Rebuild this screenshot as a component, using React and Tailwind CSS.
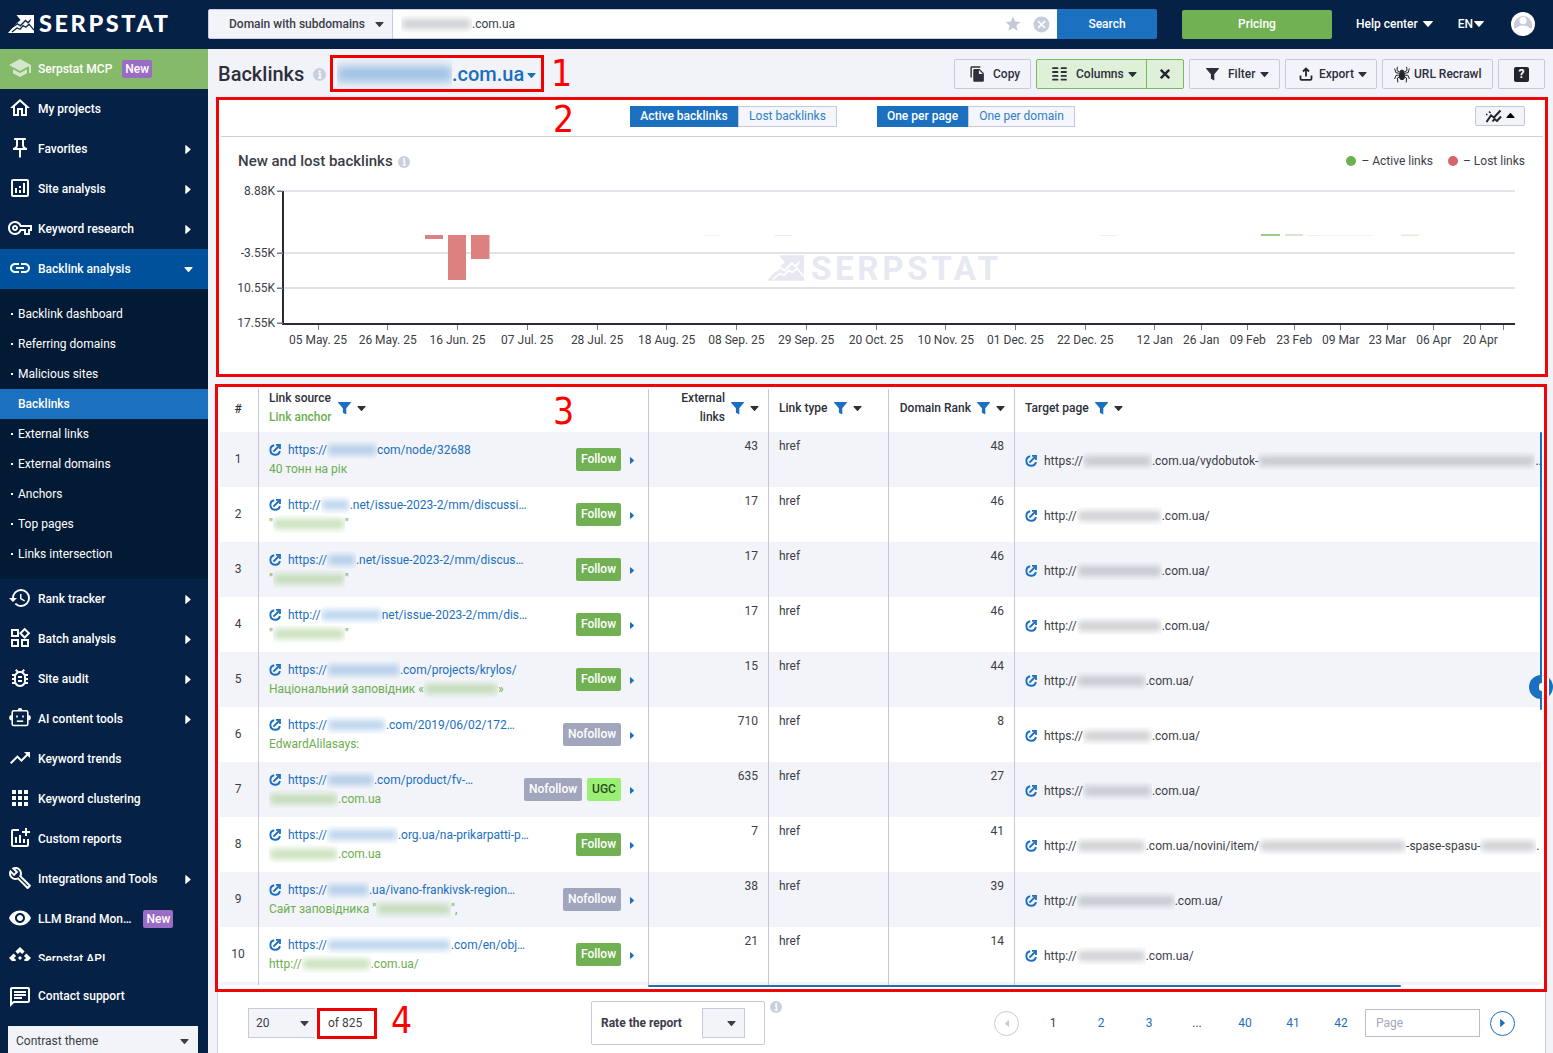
import React from 'react';
import {
  MdApi,
  MdApps,
  MdCancel,
  MdFileCopy,
  MdHistory,
  MdLink,
  MdOutlineAddchart,
  MdOutlineAnalytics,
  MdOutlineBugReport,
  MdOutlineBuild,
  MdOutlineChat,
  MdOutlineHome,
  MdOutlinePushPin,
  MdOutlineVpnKey,
  MdOutlineWidgets,
  MdRemoveRedEye,
  MdSchool,
  MdStar,
  MdTrendingUp,
} from 'react-icons/md';

const Caret = ({ className = '' }) => (
  <svg viewBox="0 0 10 6" className={`h-[5px] w-[9px] shrink-0 ${className}`} fill="currentColor">
    <path d="M0.6 0h8.8a.5.5 0 0 1 .4.8L5.6 5.6a.8.8 0 0 1-1.2 0L.2.8A.5.5 0 0 1 .6 0z" />
  </svg>
);

const CaretRight = ({ className = '' }) => (
  <svg viewBox="0 0 6 10" className={`shrink-0 ${className}`} fill="currentColor">
    <path d="M0 .6v8.8a.5.5 0 0 0 .8.4L5.6 5.6a.8.8 0 0 0 0-1.2L.8.2A.5.5 0 0 0 0 .6z" />
  </svg>
);

const Funnel = ({ className = '' }) => (
  <svg viewBox="0 0 13 13" className={`shrink-0 ${className}`} fill="currentColor">
    <path d="M.4 0h12.2c.4 0 .5.5.3.8L8.3 6.2V12.6L4.9 10.8V6.2L.1.8C-.1.5 0 0 .4 0z" />
  </svg>
);

const OpenLink = () => (
  <svg viewBox="0 0 12 12" className="h-3 w-3 shrink-0" fill="none" stroke="#1b6fbf" strokeWidth="1.9">
    <path d="M5.2 1.3A4.8 4.8 0 1 0 10.9 7" />
    <path d="M4.4 7.6 10 2" />
    <path d="M7 .9h4v4" strokeWidth="1.8" />
  </svg>
);

const Info = ({ className = '' }) => (
  <svg viewBox="0 0 12 12" className={`shrink-0 ${className}`}>
    <circle cx="6" cy="6" r="6" fill="#c9cfdd" />
    <circle cx="6.2" cy="3.1" r="1" fill="#fff" />
    <path d="M5 5h1.500v3.900M4.600 9h3" stroke="#fff" strokeWidth="1.300" fill="none" />
  </svg>
);

const RobotIcon = ({ className = '' }) => (
  <svg viewBox="-1 -0.5 24 24" className={className} fill="none" stroke="currentColor" strokeWidth="1.600">
    <rect x="3.2" y="4.2" width="15.6" height="14.8" rx="1.6" />
    <path d="M7.8 14.7h6.4" />
    <path d="M8 9v2M14 9v2" />
    <path d="M8.6 4a2.4 2.4 0 0 1 4.8 0zM2.8 8.600a2.600 2.600 0 0 0 0 5.200zM19.200 8.600a2.600 2.600 0 0 1 0 5.200z" fill="currentColor" stroke="none" />
  </svg>
);

const Spider = () => (
  <svg viewBox="0 0 16 17" className="h-[17px] w-4 shrink-0" fill="none" stroke="#22242e" strokeWidth="1">
    <ellipse cx="8" cy="10.3" rx="2.6" ry="3.4" fill="#22242e" />
    <circle cx="8" cy="6" r="1.9" fill="#22242e" />
    <path d="M6.5 6.5 3 4.6 3.4.8M9.5 6.5 13 4.6 12.6.8M6.2 7.5 1.8 6.6.6 2.5M9.8 7.5l4.4-.9 1.2-4.1" />
    <path d="M6 9 2 9.4.6 13M10 9l4 .4L15.4 13M6 10.6 3.4 12l.4 4.4M10 10.6l2.6 1.4-.4 4.4" />
  </svg>
);

const LogoMark = ({ className = '', gap }) => (
  <svg viewBox="0 0 26 18" className={className}>
    <path d="M8.500 0H26v18H0l7-8.200L12.500 5z" fill="currentColor" />
    <path d="M2 13.600 9.500 8.800l2.800 2L17.500 5.500l2.500 2.300 3-3.300" stroke={gap} strokeWidth="1.300" fill="none" />
    <path d="M4 17l5-4 3 1.200 3.200-3.600 2.600 1.600 3.200-3 5 6" stroke={gap} strokeWidth="1.200" fill="none" />
    <path d="M22.400 5.400 26 9.400V0z" fill="currentColor" />
  </svg>
);

// masked part of a url or anchor
const Masked = ({ w, tone = 'gray' }) => {
  const tones = { gray: 'bg-[#8b8e98]/42', blue: 'bg-[#4b8fd0]/38', green: 'bg-[#8fc172]/48' };
  return (
    <span className="inline-block shrink-0 overflow-hidden px-px align-middle" style={{ width: w }}>
      <span className={`my-1 block h-2.5 w-full blur-[3px] ${tones[tone]}`} />
    </span>
  );
};

const Parts = ({ parts, tone }) =>
  parts.map((part, i) => (typeof part === 'number' ? <Masked key={i} w={part} tone={tone} /> : <span key={i}>{part}</span>));

const topMenu = [
  { label: 'My projects', icon: MdOutlineHome },
  { label: 'Favorites', icon: MdOutlinePushPin, arrow: true },
  { label: 'Site analysis', icon: MdOutlineAnalytics, arrow: true },
  { label: 'Keyword research', icon: MdOutlineVpnKey, arrow: true },
];

const subMenu = [
  'Backlink dashboard',
  'Referring domains',
  'Malicious sites',
  'Backlinks',
  'External links',
  'External domains',
  'Anchors',
  'Top pages',
  'Links intersection',
];

const bottomMenu = [
  { label: 'Rank tracker', icon: MdHistory, arrow: true },
  { label: 'Batch analysis', icon: MdOutlineWidgets, arrow: true },
  { label: 'Site audit', icon: MdOutlineBugReport, arrow: true },
  { label: 'AI content tools', icon: RobotIcon, arrow: true },
  { label: 'Keyword trends', icon: MdTrendingUp },
  { label: 'Keyword clustering', icon: MdApps },
  { label: 'Custom reports', icon: MdOutlineAddchart },
  { label: 'Integrations and Tools', icon: MdOutlineBuild, arrow: true },
  { label: 'LLM Brand Mon…', icon: MdRemoveRedEye, isNew: true },
  { label: 'Serpstat API', icon: MdApi },
];

const rows = [
  { src: ['https://', 50, 'com/node/32688'], anchor: ['40 тонн на рік'], tags: ['Follow'], ext: 43, rank: 48, target: ['https://', 69, '.com.ua/vydobutok-', 277, '..'] },
  { src: ['http://', 29, '.net/issue-2023-2/mm/discussi…'], anchor: ['"', 72, '"'], tags: ['Follow'], ext: 17, rank: 46, target: ['http://', 85, '.com.ua/'] },
  { src: ['https://', 29, '.net/issue-2023-2/mm/discus…'], anchor: ['"', 72, '"'], tags: ['Follow'], ext: 17, rank: 46, target: ['http://', 85, '.com.ua/'] },
  { src: ['http://', 61, 'net/issue-2023-2/mm/dis…'], anchor: ['"', 72, '"'], tags: ['Follow'], ext: 17, rank: 46, target: ['http://', 85, '.com.ua/'] },
  { src: ['https://', 73, '.com/projects/krylos/'], anchor: ['Національний заповідник «', 74, '»'], tags: ['Follow'], ext: 15, rank: 44, target: ['http://', 69, '.com.ua/'] },
  { src: ['https://', 59, '.com/2019/06/02/172…'], anchor: ['EdwardAlilasays:'], tags: ['Nofollow'], ext: 710, rank: 8, target: ['https://', 69, '.com.ua/'] },
  { src: ['https://', 47, '.com/product/fv-…'], anchor: [69, '.com.ua'], tags: ['Nofollow', 'UGC'], ext: 635, rank: 27, target: ['https://', 69, '.com.ua/'] },
  { src: ['https://', 71, '.org.ua/na-prikarpatti-p…'], anchor: [69, '.com.ua'], tags: ['Follow'], ext: 7, rank: 41, target: ['http://', 69, '.com.ua/novini/item/', 147, '-spase-spasu-', 56, '.'] },
  { src: ['https://', 42, '.ua/ivano-frankivsk-region…'], anchor: ['Сайт заповідника "', 75, '",'], tags: ['Nofollow'], ext: 38, rank: 39, target: ['http://', 98, '.com.ua/'] },
  { src: ['https://', 124, '.com/en/obj…'], anchor: ['http://', 69, '.com.ua/'], tags: ['Follow'], ext: 21, rank: 14, target: ['http://', 69, '.com.ua/'] },
];

const tagStyles = {
  Follow: 'w-[45px] bg-[#71b154] text-white',
  Nofollow: 'w-[58px] bg-[#a2a6bc] text-white',
  UGC: 'w-[34px] bg-[#99f075] text-[#2f4a24]',
};

const xTicks = [
  [318, '05 May. 25'], [387.7, '26 May. 25'], [457.5, '16 Jun. 25'], [527.2, '07 Jul. 25'], [597, '28 Jul. 25'],
  [666.7, '18 Aug. 25'], [736.4, '08 Sep. 25'], [806.2, '29 Sep. 25'], [876, '20 Oct. 25'], [945.7, '10 Nov. 25'],
  [1015.4, '01 Dec. 25'], [1085.2, '22 Dec. 25'], [1154.7, '12 Jan'], [1201.2, '26 Jan'], [1247.7, '09 Feb'],
  [1294.2, '23 Feb'], [1340.7, '09 Mar'], [1387.2, '23 Mar'], [1433.7, '06 Apr'], [1480.2, '20 Apr'],
];

const yTicks = [[191, '8.88K'], [253, '-3.55K'], [288, '10.55K'], [323, '17.55K']];

const bars = [
  [425, 235, 18, 4, '#dd8080'], [448, 235, 18, 45, '#dd8080'], [471, 235, 18.5, 24, '#dd8080'],
  [1261, 234, 19, 2, '#9ccb86'], [1285, 234, 18, 2, '#d6e8cc'], [1307, 235, 18, 1, '#eef1ec'],
  [1326, 235, 46, 1, '#f3f4f2'], [1401, 234.5, 18, 1.5, '#e2eedb'], [774, 235, 18, 1, '#eaf0e6'],
  [1100, 235, 17, 1, '#eef1ec'], [704, 235, 16, 1, '#f1f3ef'],
];

const NewBadge = ({ className = '' }) => (
  <span className={`flex h-[18px] w-[30px] items-center justify-center rounded-[2px] bg-[#9a6cc4] text-xs text-white ${className}`}>New</span>
);

const MenuItem = ({ item }) => {
  const Icon = item.icon;
  return (
    <div className="flex h-10 shrink-0 items-center pr-[17px] pl-2 text-xs font-medium text-white">
      <Icon className="-mt-0.5 h-6 w-6 shrink-0" />
      <span className="ml-1.5 whitespace-nowrap">{item.label}</span>
      {item.isNew && <NewBadge className="ml-3" />}
      {item.arrow && <CaretRight className="ml-auto h-[9px] w-[6px]" />}
    </div>
  );
};

const Sidebar = () => (
  <aside className="flex w-[208px] shrink-0 flex-col overflow-hidden bg-[#052145]">
    <div className="flex h-10 shrink-0 items-center bg-[#84ba6a] pl-2 text-xs font-medium text-white">
      <MdSchool className="-mt-0.5 h-6 w-6 opacity-65" />
      <span className="ml-1.5">Serpstat MCP</span>
      <NewBadge className="ml-2.5" />
    </div>
    {topMenu.map((item) => <MenuItem key={item.label} item={item} />)}
    <div className="flex h-10 shrink-0 items-center bg-[#00519b] pr-[15px] pl-2 text-xs font-medium text-white">
      <MdLink className="-mt-0.5 h-6 w-6" />
      <span className="ml-1.5">Backlink analysis</span>
      <Caret className="ml-auto" />
    </div>
    <div className="shrink-0 bg-[#031a35] py-2.5">
      {subMenu.map((label) => (
        <div
          key={label}
          className={`flex h-[30px] items-center text-xs text-white ${label === 'Backlinks' ? 'bg-[#1b70c0] pl-[18px] font-medium' : 'pl-[11px]'}`}
        >
          {label !== 'Backlinks' && <span className="mr-[5px] h-[2px] w-[2px] bg-white" />}
          {label}
        </div>
      ))}
    </div>
    <div className="h-[382px] shrink-0 overflow-hidden">
      {bottomMenu.map((item) => <MenuItem key={item.label} item={item} />)}
    </div>
    <div className="flex h-[65px] shrink-0 items-center pt-1 pl-2 text-xs font-medium text-white">
      <MdOutlineChat className="mt-0.5 h-6 w-6" />
      <span className="ml-1.5">Contact support</span>
    </div>
    <div className="mr-2.5 ml-2 flex h-[30px] shrink-0 items-center justify-between bg-[#f2f4fa] pr-[9px] pl-2 text-xs text-[#3b3d47]">
      Contrast theme
      <Caret />
    </div>
  </aside>
);

const Header = () => (
  <header className="flex h-[49px] shrink-0 items-center bg-[#052145] pb-px text-xs">
    <div className="flex w-[208px] items-center pl-2 text-white">
      <LogoMark className="h-[18px] w-[26px]" gap="#052145" />
      <svg className="ml-[5px] h-[26px] w-[134px] overflow-visible" fill="currentColor">
        <text x="0" y="21" fontSize="23.500" fontWeight="900" textLength="129" className="font-[Lato,sans-serif]">SERPSTAT</text>
      </svg>
    </div>
    <div className="flex h-[30px] w-[185px] items-center justify-between rounded-l-[2px] border border-[#c3cfe0] bg-[#f2f4fa] pr-2 pl-5 font-medium text-[#3b3d47]">
      Domain with subdomains
      <Caret />
    </div>
    <div className="flex h-[30px] w-[664px] items-center border-y border-[#c3cfe0] bg-white pl-2 text-[#3b3d47]">
      <Masked w={71} />
      .com.ua
      <MdStar className="mr-2.5 ml-auto h-[18px] w-[18px] text-[#c5c8d8]" />
      <MdCancel className="mr-[6px] h-[19px] w-[19px] text-[#c9ccda]" />
    </div>
    <button className="h-[30px] w-[100px] rounded-r-[2px] bg-[#1b70c0] pb-px font-medium text-white">Search</button>
    <button className="ml-[25px] h-[29px] w-[150px] rounded-[2px] bg-[#71b154] font-medium text-white">Pricing</button>
    <span className="ml-[24px] flex items-center font-medium text-white">
      Help center
      <Caret className="ml-[5px] h-[6px] w-[10px]" />
    </span>
    <span className="ml-[25px] flex items-center font-medium text-white">
      EN
      <Caret className="ml-px h-[6px] w-[10px]" />
    </span>
    <svg viewBox="0 0 24 24" className="ml-[27px] h-6 w-6">
      <circle cx="12" cy="12" r="12" fill="#fff" />
      <path d="M3 13a9 9 0 1 1 18 0v3H3z" fill="#c6cadb" />
      <circle cx="12" cy="8.6" r="3.6" fill="#fff" />
      <path d="M4 19c1-4 4.500-5.500 8-5.500s7 1.500 8 5.500z" fill="#fff" />
    </svg>
  </header>
);

const toolButton = 'flex h-[30px] shrink-0 items-center rounded-[2px] border border-[#c7cbd9] bg-[#f2f4fa]';

const Toolbar = () => (
  <div className="flex h-12 shrink-0 items-center pt-0.5 text-xs font-medium text-[#2d2f3a]">
    <h1 className="ml-2.5 w-[95px] text-[20px]">Backlinks</h1>
    <Info className="h-[13px] w-[13px]" />
    <div className="ml-[11px] flex items-center text-[20px] whitespace-nowrap text-[#1b6fbf]">
      <span className="inline-block w-[115px] overflow-hidden">
        <span className="my-2 block h-4 w-full bg-[#4b8fd0]/50 blur-[5px]" />
      </span>
      .com.ua
      <Caret className="mt-0.5 ml-[3px] h-1 w-[7px]" />
    </div>
    <div className="mr-2 ml-auto flex gap-[5px]">
      <button className={`${toolButton} w-[77px] pl-[14px]`}>
        <MdFileCopy className="mr-[7px] h-[18px] w-[17px]" />
        Copy
      </button>
      <div className="flex h-[30px] w-[148px] items-center rounded-[2px] border border-[#76ba5e] bg-[#dff0d8]">
        <div className="flex h-full w-[110px] items-center border-r border-[#76ba5e] pl-[15px]">
          <svg viewBox="0 0 15 14" className="mr-[9px] h-[14px] w-[15px]" stroke="#2d2f3a" strokeWidth="1.800" strokeLinecap="round">
            <path d="M1 1.200h4.500M9.500 1.200H14M1 5h4.500M9.500 5H14M1 8.900h4.500M9.500 8.900H14M1 12.700h4.500M9.500 12.700H14" />
          </svg>
          Columns
          <Caret className="ml-1 w-2" />
        </div>
        <svg viewBox="0 0 10 10" className="mx-auto h-[10px] w-[10px]" stroke="#22242e" strokeWidth="2.400">
          <path d="M.8.8l8.400 8.400M9.200.8.8 9.200" />
        </svg>
      </div>
      <button className={`${toolButton} w-[91px] pl-4`}>
        <Funnel className="mr-[9px] h-[13px] w-[13px]" />
        Filter
        <Caret className="ml-[5px] w-2" />
      </button>
      <button className={`${toolButton} w-[92px] pl-[13px]`}>
        <svg viewBox="0 0 14 14" className="mr-[6px] h-[14px] w-[14px]" fill="none" stroke="#22242e" strokeWidth="1.800">
          <path d="M1.500 8.500v3.200a1.200 1.200 0 0 0 1.200 1.200h8.600a1.200 1.200 0 0 0 1.200-1.200V8.500M7 9.500V2M4 4.500 7 1.500l3 3" />
        </svg>
        Export
        <Caret className="ml-1 w-2" />
      </button>
      <button className={`${toolButton} w-[111px] pl-[11px]`}>
        <Spider />
        <span className="ml-1 whitespace-nowrap">URL Recrawl</span>
      </button>
      <button className={`${toolButton} w-[47px] justify-center`}>
        <span className="flex h-[15px] w-[15px] items-center justify-center rounded-[2px] bg-[#22242e] text-xs font-bold text-white">?</span>
      </button>
    </div>
  </div>
);

const Chart = () => (
  <svg viewBox="221 180 1322 180" className="block h-[180px] w-[1322px]" fontSize="12" fill="#3b3d47">
    {yTicks.slice(0, 3).map(([y]) => <rect key={y} x="284" y={y - 1} width="1231" height="2" fill="#e0e3ea" />)}
    <g color="#e7e9f2">
      <svg x="767" y="255" width="37" height="26">
        <LogoMark gap="#fff" />
      </svg>
      <text x="811" y="280" fontSize="33" fontWeight="700" textLength="187" fill="#e7e9f2">SERPSTAT</text>
    </g>
    {bars.map(([x, y, w, h, fill]) => <rect key={x} x={x} y={y} width={w} height={h} fill={fill} />)}
    <rect x="282" y="191" width="2" height="133" fill="#2b2c3b" />
    <rect x="282" y="323" width="1233" height="2" fill="#2b2c3b" />
    {yTicks.map(([y, label]) => (
      <g key={label}>
        <rect x="277" y={y - 0.5} width="6" height="1.500" fill="#777b88" />
        <text x="275" y={y + 4} textAnchor="end">{label}</text>
      </g>
    ))}
    {xTicks.map(([x, label]) => (
      <g key={label}>
        <rect x={Math.floor(x)} y="325" width="1" height="5" fill="#777b88" />
        <text x={x} y="344" textAnchor="middle">{label}</text>
      </g>
    ))}
    <rect x="1503" y="325" width="1" height="5" fill="#777b88" />
  </svg>
);

const ChartPanel = () => (
  <section className="mr-[7px] ml-[10px] h-[280px] shrink-0 bg-white px-[3px] text-xs">
    <div className="flex h-10 items-center border-b border-[#cdd1dc] pr-[18px] pl-[409px]">
      <div className="flex h-[21px] leading-[19px]">
        <span className="w-[108px] bg-[#1b70c0] pt-px text-center font-medium text-white">Active backlinks</span>
        <span className="w-[99px] border border-[#c3cad9] bg-[#f4f6fb] text-center text-[#2f7fc6]">Lost backlinks</span>
      </div>
      <div className="ml-10 flex h-[21px] leading-[19px]">
        <span className="w-[91px] bg-[#1b70c0] pt-px text-center font-medium text-white">One per page</span>
        <span className="w-[107px] border border-[#c3cad9] bg-[#f4f6fb] text-center text-[#2f7fc6]">One per domain</span>
      </div>
      <div className="mb-0.5 ml-auto flex h-5 w-[50px] items-center justify-center gap-[4px] rounded-[2px] border border-[#c3c8d6] bg-[#f2f4fa]">
        <svg viewBox="0 0 17 14" className="h-[14px] w-[17px]" fill="none" stroke="#22242e" strokeWidth="2">
          <path d="M1.500 13 6 6.500l3 2L15.500 1.500" />
          <path d="M7.500 12.500 9.500 10l2.500 2 4-4.500" />
          <path d="M1 5.500h1.500M4 2.500 5.500 4" strokeWidth="1.500" />
        </svg>
        <Caret className="w-2 rotate-180" />
      </div>
    </div>
    <div className="flex h-[43px] items-center pt-1 pr-[18px] pl-[17px] text-[#3b3d47]">
      <h2 className="pt-0.5 text-[15px] font-medium">New and lost backlinks</h2>
      <Info className="mt-0.5 ml-[5px] h-3 w-3" />
      <span className="ml-auto h-2.5 w-2.5 rounded-full bg-[#6cb04f]" />
      <span className="ml-[5px]">– Active links</span>
      <span className="ml-[15px] h-2.5 w-2.5 rounded-full bg-[#d5646b]" />
      <span className="ml-[5px]">– Lost links</span>
    </div>
    <Chart />
  </section>
);

const HeadIcons = () => (
  <>
    <Funnel className="ml-[6px] h-[13px] w-[13px] text-[#1b6fbf]" />
    <Caret className="ml-[6px] h-1 w-2" />
  </>
);

const grid = 'grid grid-cols-[38px_390px_120px_120px_126px_527px]';

const TableRow = ({ row, index }) => (
  <div className={`${grid} h-[55px] ${index % 2 === 0 ? 'bg-[#f2f4f9]' : 'bg-white'}`}>
    <div className="flex items-center justify-center pr-0.5 pb-px">{index + 1}</div>
    <div className="flex border-l border-[#c5c9d4] pr-[14px] pl-[10px]">
      <div className="whitespace-nowrap">
        <div className="mt-2 flex h-[19px] items-center text-[#1b6fbf]">
          <OpenLink />
          <span className="ml-[7px] flex items-center">
            <Parts parts={row.src} tone="blue" />
          </span>
        </div>
        <div className="flex h-[19px] items-center text-[#6cae4f]">
          <Parts parts={row.anchor} tone="green" />
        </div>
      </div>
      <div className="ml-auto flex items-center gap-[5px]">
        {row.tags.map((tag) => (
          <span key={tag} className={`flex h-[23px] items-center justify-center rounded-[2px] pb-0.5 font-medium ${tagStyles[tag]}`}>{tag}</span>
        ))}
        <CaretRight className="mt-0.5 ml-1 h-[7px] w-1 text-[#1b6fbf]" />
      </div>
    </div>
    <div className="border-l border-[#c5c9d4] pt-1 pr-[10px] text-right leading-5">{row.ext}</div>
    <div className="border-l border-[#c5c9d4] pt-1 pl-[10px] leading-5">href</div>
    <div className="border-l border-[#c5c9d4] pt-1 pr-[10px] text-right leading-5">{row.rank}</div>
    <div className="flex items-center border-l border-[#c5c9d4] pt-0.5 pl-[10px] whitespace-nowrap">
      <OpenLink />
      <span className="ml-[7px] flex items-center">
        <Parts parts={row.target} tone="gray" />
      </span>
    </div>
  </div>
);

const LinksTable = () => (
  <section className="relative mr-2 ml-[10px] mt-[7px] h-[608px] shrink-0 bg-white pt-[5px] pr-1 pl-0.5 text-xs text-[#3b3d47]">
    <div className={`${grid} h-[43px] font-medium text-[#2d2f3a]`}>
      <div className="flex items-center justify-center pr-0.5 pb-1">#</div>
      <div className="flex items-center border-l border-[#c5c9d4] pb-[5px] pl-[10px] leading-[19px]">
        <div>
          Link source
          <div className="text-[#6cae4f]">Link anchor</div>
        </div>
        <HeadIcons />
      </div>
      <div className="flex items-center justify-end border-l border-[#c5c9d4] pr-[9px] pb-[5px] text-right leading-[19px]">
        <div className="w-[50px]">External links</div>
        <HeadIcons />
      </div>
      <div className="flex items-center border-l border-[#c5c9d4] pb-[5px] pl-[10px]">
        Link type
        <HeadIcons />
      </div>
      <div className="flex items-center justify-end border-l border-[#c5c9d4] pr-[9px] pb-[5px]">
        Domain Rank
        <HeadIcons />
      </div>
      <div className="flex items-center border-l border-[#c5c9d4] pb-[5px] pl-[10px]">
        Target page
        <HeadIcons />
      </div>
    </div>
    {rows.map((row, index) => <TableRow key={index} row={row} index={index} />)}
    <div className={`${grid} h-[3px] bg-[#f2f4f9]`}>
      <span />
      <span className="border-l border-[#c5c9d4]" />
      <span className="border-l border-[#c5c9d4]" />
      <span className="border-l border-[#c5c9d4]" />
      <span className="border-l border-[#c5c9d4]" />
      <span className="border-l border-[#c5c9d4]" />
    </div>
    <div className="ml-[428px] h-0.5 w-[753px] rounded-full bg-[#1f72ae]" />

    {/* floating scroll handle */}
    <div className="absolute top-[48px] left-[1322px] h-[278px] w-0.5 rounded-full bg-[#1b70c0]" />
    <div className="absolute top-[291px] left-[1311px] flex h-6 w-6 items-center overflow-hidden rounded-full bg-[#1b70c0] text-white">
      <span className="ml-[10px] h-2 w-[3px] rounded-l-full bg-white" />
      <span className="h-6 w-[7px] bg-white" />
    </div>
  </section>
);

const Footer = () => (
  <footer className="mr-[7px] ml-[9px] flex flex-1 border-x border-[#cdd0de] bg-white pt-2 text-xs text-[#3b3d47]">
    <div className="mt-2 ml-[30px] flex h-[30px] w-[67px] items-center justify-between border border-r-0 border-[#c7cbd9] bg-[#f2f4fa] pr-[6px] pl-[7px]">
      20
      <Caret />
    </div>
    <span className="mt-2 ml-[13px] w-[262px] leading-[30px]">of 825</span>
    <div className="mt-px ml-px flex h-11 w-[174px] items-center rounded-[2px] border border-[#c7cbd9] pl-[9px] font-bold">
      Rate the report
      <span className="mr-[19px] ml-auto flex h-[30px] w-[43px] items-center justify-end border border-[#c7cbd9] bg-[#f2f4fa] pr-2">
        <Caret />
      </span>
    </div>
    <Info className="mt-px ml-[5px] h-3 w-3" />
    <div className="mt-2 mr-[30px] ml-auto flex h-[30px] items-center text-[#1b6fbf]">
      <span className="mr-[10px] flex h-[25px] w-[25px] items-center justify-center rounded-full border border-[#c9ccd2] text-[#c9ccd2]">
        <CaretRight className="h-[7px] w-1 rotate-180" />
      </span>
      <span className="w-12 text-center text-[#3b3d47]">1</span>
      <span className="w-12 text-center">2</span>
      <span className="w-12 text-center">3</span>
      <span className="w-12 text-center text-[#3b3d47]">...</span>
      <span className="w-12 text-center">40</span>
      <span className="w-12 text-center">41</span>
      <span className="w-12 text-center">42</span>
      <span className="flex h-7 w-[115px] items-center border border-[#b9bdcd] pl-[10px] text-[#a3a7bb]">Page</span>
      <span className="ml-[10px] flex h-[25px] w-[25px] items-center justify-center rounded-full border border-[#1b6fbf]">
        <CaretRight className="h-2 w-[5px]" />
      </span>
    </div>
  </footer>
);

// numbered callouts over the page
const Callouts = () => (
  <div className="pointer-events-none font-['DejaVu_Sans_Condensed','DejaVu_Sans',sans-serif] text-[37px] leading-none text-[#fe0000]">
    <div className="absolute top-[55px] left-[330px] h-[37px] w-[214px] border-3 border-[#f20000]" />
    <div className="absolute top-[97px] left-[216px] h-[280px] w-[1332px] border-3 border-[#ee0508]" />
    <div className="absolute top-[384px] left-[215px] h-[608px] w-[1332px] border-3 border-[#ee0508]" />
    <div className="absolute top-[1008px] left-[317px] h-[31px] w-[60px] border-3 border-[#f20000]" />
    <span className="absolute top-[55px] left-[551px]">1</span>
    <span className="absolute top-[101px] left-[553px]">2</span>
    <span className="absolute top-[393px] left-[553px]">3</span>
    <span className="absolute top-[1002px] left-[391px]">4</span>
  </div>
);

export default function App() {
  return (
    <div className="relative flex h-[1053px] w-[1553px] flex-col overflow-hidden bg-[#f1f3f9] font-[Roboto,sans-serif]">
      <Header />
      <div className="flex min-h-0 flex-1">
        <Sidebar />
        <main className="flex w-[1345px] flex-col">
          <Toolbar />
          <ChartPanel />
          <LinksTable />
          <Footer />
        </main>
      </div>
      <Callouts />
    </div>
  );
}
